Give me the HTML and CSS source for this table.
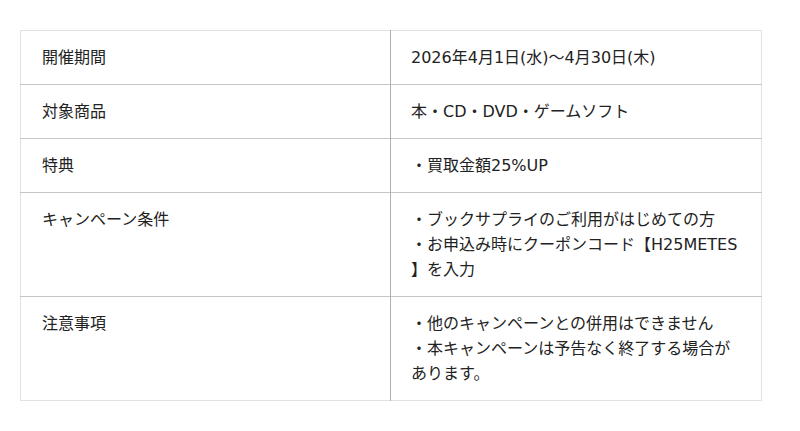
FILE: index.html
```html
<!DOCTYPE html>
<html lang="ja">
<head>
<meta charset="utf-8">
<link rel="stylesheet" href="styles.css">
</head>
<body>
<div class="wrap">
<table class="info">
<tr><th>開催期間</th><td>2026年4月1日(水)～4月30日(木)</td></tr>
<tr><th>対象商品</th><td>本・CD・DVD・ゲームソフト</td></tr>
<tr><th>特典</th><td>・買取金額25%UP</td></tr>
<tr><th>キャンペーン条件</th><td>・ブックサプライのご利用がはじめての方<br>・お申込み時にクーポンコード【H25METES<wbr>】を入力</td></tr>
<tr><th>注意事項</th><td>・他のキャンペーンとの併用はできません<br>・本キャンペーンは予告なく終了する場合があります。</td></tr>
</table>
</div>
</body>
</html>
```
FILE: styles.css
```css
html, body { margin: 0; padding: 0; background: #fff; }
body {
  font-family: "DejaVu Sans", "Noto Sans CJK JP", sans-serif;
  font-size: 16px;
  color: #222;
}
.wrap { padding: 30px 20px; width: 742px; }
.info {
  width: 742px;
  border-collapse: collapse;
  table-layout: fixed;
  border: 1px solid #e2e2e2;
}
.info th, .info td {
  text-align: left;
  vertical-align: top;
  font-weight: normal;
  line-height: 25px;
  padding: 14px 20px 14px 21px;
  border-top: 1px solid #c6c6c6;
}
.info tr:first-child th, .info tr:first-child td { border-top: 1px solid #e2e2e2; }
.info th { width: 328px; border-right: 1px solid #b0b0b0; }
.info td { padding-left: 20px; }
```
